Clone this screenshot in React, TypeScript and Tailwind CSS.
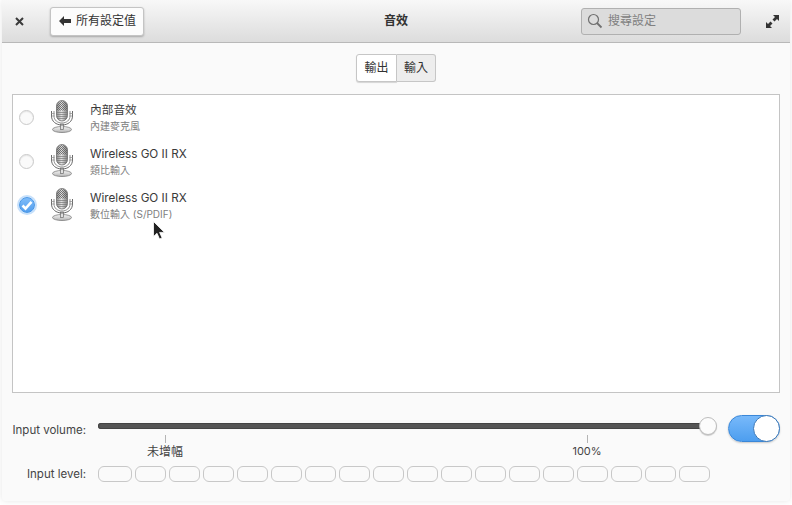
import { useId } from "react";

const CJK = "font-['Inter','Noto_Sans_CJK_TC',sans-serif]";

// microphone device icon
const MicIcon = () => {
  const id = useId();
  return (
    <svg width="32" height="34" viewBox="0 0 32 34" fill="none">
      <defs>
        <linearGradient id={`${id}head`} x1="0" y1="0" x2="1" y2="0">
          <stop offset="0" stopColor="#8c8c8c" />
          <stop offset="0.45" stopColor="#e2e2e2" />
          <stop offset="1" stopColor="#7e7e7e" />
        </linearGradient>
        <linearGradient id={`${id}base`} x1="0" y1="0" x2="0" y2="1">
          <stop offset="0" stopColor="#f6f6f6" />
          <stop offset="1" stopColor="#b4b4b4" />
        </linearGradient>
        <pattern id={`${id}grille`} width="2" height="2" patternUnits="userSpaceOnUse">
          <rect width="1" height="1" fill="#5a5a5a" />
          <rect x="1" y="1" width="1" height="1" fill="#5a5a5a" />
        </pattern>
      </defs>
      {/* base */}
      <ellipse cx="16" cy="29.500" rx="9.500" ry="3" fill={`url(#${id}base)`} stroke="#7c7c7c" strokeWidth="0.800" />
      <rect x="14.500" y="24" width="3" height="5.500" fill="#e0e0e0" stroke="#6c6c6c" strokeWidth="0.700" />
      {/* cradle */}
      <path d="M5.500 11v5c0 5.300 4.500 9 10.500 9s10.500-3.700 10.500-9v-5" stroke="#6a6a6a" strokeWidth="1" />
      <path d="M8 11v5c0 4.200 3.500 7 8 7s8-2.800 8-7v-5" stroke="#8e8e8e" strokeWidth="1" />
      <path d="M5 13.500h3.500M23.500 13.500h3.500M5.500 16h3M23.500 16h3" stroke="#8a8a8a" strokeWidth="0.700" />
      {/* head */}
      <rect x="10.500" y="0.500" width="11" height="20.500" rx="5.500" fill={`url(#${id}head)`} stroke="#6c6c6c" strokeWidth="0.800" />
      <path d="M11 10.500V6a5 5 0 0 1 10 0v4.500z" fill={`url(#${id}grille)`} opacity="0.800" />
      <path d="M11 12.500h10M11 14.500h10M11 16.500h10M11.500 18.500h9" stroke="#777" strokeWidth="0.700" />
    </svg>
  );
};

// one row of the device list
const DeviceRow = ({ title, sub, checked }: { title: string; sub: string; checked?: boolean }) => (
  <div className="flex h-[44px] items-center pl-[6px]">
    {checked ? (
      <div className="flex size-[16px] mr-[-1px] items-center justify-center rounded-full border border-[#4a97e6] bg-[linear-gradient(#7fbcf9,#549fee)] shadow-[0_0_0_2px_#c6e0fb]">
        <svg width="12" height="11" viewBox="0 0 12 11" fill="none">
          <path d="M1.500 5.500 4.500 8.500 10.500 1.800" stroke="white" strokeWidth="2.600" />
        </svg>
      </div>
    ) : (
      <div className="size-[15px] rounded-full border border-[#c9c9c9] bg-[#fafafa] shadow-[inset_0_1px_1px_#e6e6e6]" />
    )}
    <div className="ml-[12px]"><MicIcon /></div>
    <div className="ml-[12px] mt-[1px] flex flex-col">
      <span className="text-[11.700px] leading-[17px] text-[#3a3a3a]">{title}</span>
      <span className="text-[10px] leading-[15px] text-[#808080]">{sub}</span>
    </div>
  </div>
);

const levels = Array.from({ length: 17 });

export default function App() {
  return (
    <div className={`${CJK} relative h-[505px] w-[792px] overflow-hidden bg-white px-[2px] pb-[4px]`}>
      <div className="flex h-full flex-col rounded-b-[4px] bg-[#fafafa] shadow-[0_0_6px_rgba(0,0,0,0.1)]">

        {/* header */}
        <div className="flex h-[43px] shrink-0 items-center border-b border-[#b8b8b8] bg-[linear-gradient(#f8f8f8,#dcdcdc)] pl-[12px] pr-[8px]">
          <svg width="9" height="9" viewBox="0 0 9 9" className="ml-px">
            <path d="M1 1l7 7M8 1 1 8" stroke="#3a3a3a" strokeWidth="2" />
          </svg>
          <button className="ml-[26px] flex h-[29px] w-[94px] items-center rounded-[3px] border border-[#c4c4c4] bg-[#fcfcfc] pl-[8px] text-[12px] text-[#333] shadow-[0_1px_2px_rgba(0,0,0,0.25)]">
            <svg width="12" height="10" viewBox="0 0 12 10">
              <path d="M0 5l5-5v3h7v4H5v3z" fill="#333" />
            </svg>
            <span className="ml-[5px]">所有設定值</span>
          </button>
          <div className="ml-[236px] w-[32px] whitespace-nowrap text-center text-[12px] font-bold text-[#333]">音效</div>
          <div className="ml-[169px] flex h-[27px] w-[160px] items-center rounded-[3px] border border-[#b0b0b0] bg-[#dcdcdc] pl-[5px] text-[12px] text-[#808080]">
            <svg width="16" height="16" viewBox="0 0 16 16" fill="none">
              <circle cx="6.500" cy="6.500" r="5" stroke="#707070" strokeWidth="1.200" />
              <path d="M10 10l4.500 4.500" stroke="#707070" strokeWidth="1.800" />
            </svg>
            <span className="ml-[5px]">搜尋設定</span>
          </div>
          <svg width="13" height="13" viewBox="0 0 13 13" className="ml-[25px]">
            <path d="M7 0h6v6l-2-2-2.500 2.500-2-2L9 2zM0 7l2 2 2.500-2.500 2 2L4 11l2 2H0z" fill="#333" />
          </svg>
        </div>

        {/* output / input switcher */}
        <div className="mt-[11px] flex justify-center">
          <div className="flex h-[28px] text-[12px] text-[#333]">
            <div className="flex w-[41px] items-center justify-center rounded-l-[3px] border border-[#c6c6c6] bg-white shadow-[0_1px_1px_rgba(0,0,0,0.15)]">輸出</div>
            <div className="flex w-[39px] items-center justify-center rounded-r-[3px] border border-l-0 border-[#c6c6c6] bg-[#ededed]">輸入</div>
          </div>
        </div>

        {/* device list */}
        <div className="mx-[10px] mt-[12px] h-[299px] border border-[#c4c4c4] bg-white">
          <DeviceRow title="內部音效" sub="內建麥克風" />
          <DeviceRow title="Wireless GO II RX" sub="類比輸入" />
          <DeviceRow title="Wireless GO II RX" sub="數位輸入 (S/PDIF)" checked />
        </div>

        {/* volume */}
        <div className="mt-[23px] flex items-start pl-[10px] pr-[8px]">
          <div className="flex w-[74px] flex-col items-end whitespace-nowrap text-[11.500px] text-[#444]">
            <span className="mt-[6px] leading-[16px]">Input volume:</span>
            <span className="mt-[28px] leading-[16px]">Input level:</span>
          </div>
          <div className="ml-[12px] w-[612px]">
            <div className="relative mt-[7px] h-[6px] rounded-full bg-[#555] shadow-[inset_0_0_0_1px_#444]">
              <div className="absolute right-[-7px] top-[-6px] size-[18px] rounded-full border border-[#bdbdbd] bg-[#fcfcfc] shadow-[0_1px_1px_rgba(0,0,0,0.2)]" />
            </div>
            <div className="mt-[6px] flex text-[12px] text-[#444]">
              <div className="ml-[45px] flex w-[44px] flex-col items-center">
                <div className="h-[8px] w-px bg-[#b4b4b4]" />
                <span className="mt-px leading-[16px]">未增幅</span>
              </div>
              <div className="ml-[378px] flex w-[44px] flex-col items-center">
                <div className="h-[8px] w-px bg-[#b4b4b4]" />
                <span className="leading-[16px] text-[11px]">100%</span>
              </div>
            </div>
            <div className="mt-[6px] flex gap-[3px]">
              <div className="h-[16px] w-[34px] rounded-[6px] border border-[#c8c8c8]" />
              {levels.map((_, i) => (
                <div key={i} className="h-[16px] w-[31px] rounded-[6px] border border-[#c8c8c8]" />
              ))}
            </div>
          </div>
          <div className="ml-[18px] -mt-[1px] flex h-[27px] w-[52px] justify-end rounded-full border border-[#3a87d8] bg-[linear-gradient(#78b9fa,#4d9eef)] shadow-[0_1px_2px_rgba(0,0,0,0.2)]">
            <div className="-m-px size-[27px] rounded-full border border-[#3b78b8] bg-white" />
          </div>
        </div>
      </div>

      {/* mouse cursor */}
      <svg width="13" height="19" viewBox="0 0 13 19" className="absolute left-[153px] top-[221px]">
        <path d="M0.500 0.500v15l3.500-3.200 2.500 5.700 2.600-1.100-2.500-5.500h4.900z" fill="#222" stroke="white" strokeWidth="0.800" />
      </svg>
    </div>
  );
}
